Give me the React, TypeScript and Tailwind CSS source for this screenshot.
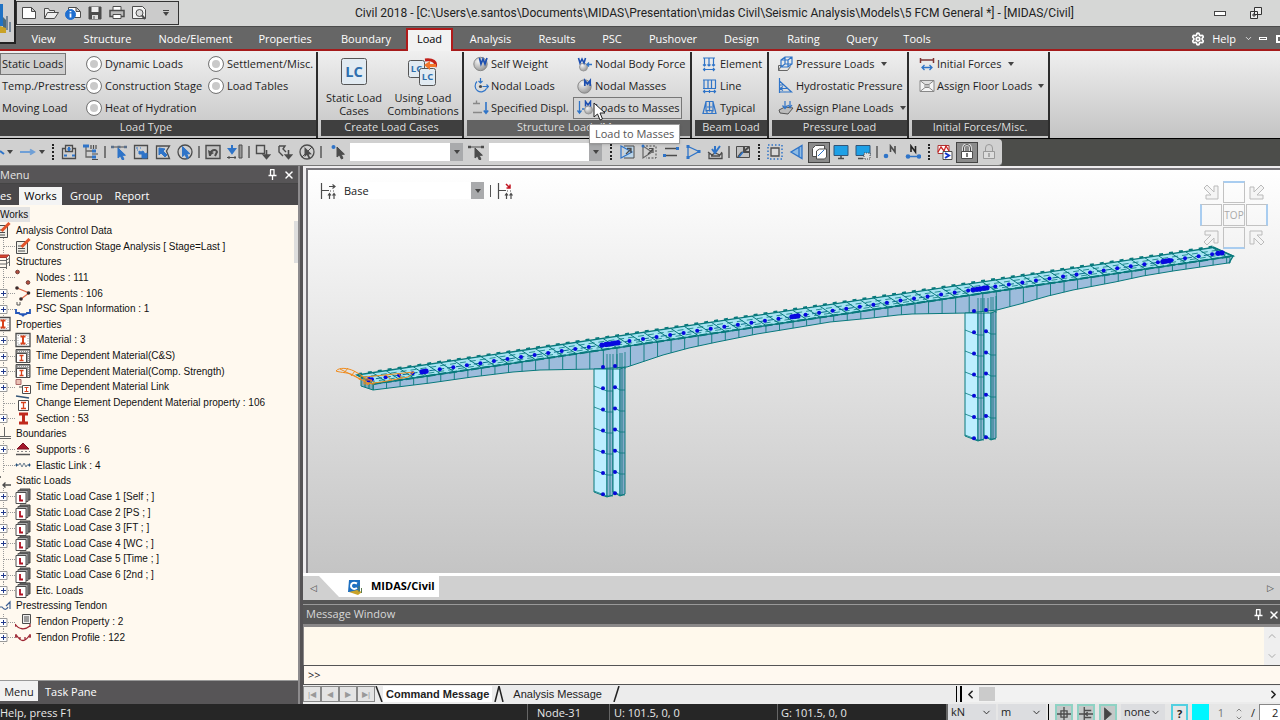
import type { ReactNode } from "react"
import { ChevronDown, ChevronLeft, ChevronRight, ChevronUp, Settings, X } from "lucide-react"

const UI = "font-['Open_Sans','Noto_Sans',sans-serif]"
const ARIAL = "font-['Liberation_Sans',Arial,sans-serif]"

const B = "#2f74c8"
const G = "#4c4c4c"

/* ---------- icons ---------- */

function Svg({ children, size = 16, vb = 16 }: { children: ReactNode; size?: number; vb?: number }) {
  return (
    <svg width={size} height={size} viewBox={`0 0 ${vb} ${vb}`} fill="none" stroke={G} strokeWidth={1} className="shrink-0" aria-hidden>
      {children}
    </svg>
  )
}

const cursorPath = "M0 0 L0 10 L2.4 8 L4.4 12 L6 11.2 L4.2 7.4 L7.4 7.2 Z"

const icons: Record<string, ReactNode> = {
  // quick access
  newDoc: <path d="M1.5 2.5h9l4 4v7h-13z M10.5 2.5v4h4" fill="#fff" />,
  open: <path d="M1.5 13.5v-10h4l1 2h5v2 M1.5 13.5l3-6h11l-4 6z" fill="#eee" />,
  info: (
    <>
      <path d="M3.5 2.5h8l4 4v6h-12z M11 2.5v4h4" fill="#fff" />
      <circle cx="5.5" cy="9.500" r="5" fill="#1f6fd0" stroke="#1f6fd0" />
      <path d="M5.500 8.500v4M5.500 6v1.300" stroke="#fff" strokeWidth="1.800" />
    </>
  ),
  save: (
    <>
      <path d="M2 2h12v12h-12z" fill="#4c4c4c" />
      <path d="M4.500 2h7v5h-7z" fill="#eee" stroke="none" />
      <path d="M5 10h6v4h-6z" fill="#ddd" stroke="none" />
      <path d="M7 11v3" />
    </>
  ),
  print: (
    <>
      <path d="M4 1.500h8v4h-8z" fill="#fff" />
      <path d="M1 5.500h14v6h-14z" fill="#bbb" strokeWidth="1.500" />
      <path d="M4 9.500h8v4h-8z" fill="#fff" />
    </>
  ),
  preview: (
    <>
      <path d="M1.500 13.500v-12h10l3 3v9z" fill="#f3f3f3" />
      <circle cx="8.500" cy="8" r="3.500" fill="#ddd" />
      <path d="M11 10.500l3 3.500" strokeWidth="2" />
    </>
  ),
  // ribbon
  weight: (
    <>
      <circle cx="7.500" cy="8" r="6.700" fill="url(#ball)" stroke="#888" />
      <path d="M6.500 2l1.500 6 2-5 2 5 2-6" stroke="#1d4fb0" strokeWidth="1.700" />
    </>
  ),
  body: (
    <>
      <circle cx="6.500" cy="11" r="4" fill="url(#ball)" stroke="#999" />
      <path d="M1.500 2l1.500 5 2-4 2 4 1.500-5" stroke="#1d4fb0" strokeWidth="1.600" />
      <path d="M10 8.500h5M12 6.500l-2 2 2 2" stroke={B} strokeWidth="1.300" />
    </>
  ),
  nodal: (
    <>
      <path d="M4 3.500a6 6 0 1 0 9.500 7" stroke={B} strokeWidth="1.200" />
      <circle cx="7.500" cy="8.500" r="1.600" fill={G} stroke="none" />
      <path d="M7.500 0v5M5.500 3l2 2 2-2M9.500 8.500h6M13.500 6.500l2 2-2 2" stroke={B} strokeWidth="1.200" />
    </>
  ),
  mass: (
    <>
      <circle cx="7.500" cy="8.500" r="6.700" fill="url(#ball)" stroke="#888" />
      <path d="M7.800 8V2.500l2.700 3.500 2.700-3.500V8" stroke="#1d4fb0" strokeWidth="1.700" />
    </>
  ),
  displ: (
    <>
      <path d="M0 3.500h7M3.500 3.500v-3M0 12.500h9" stroke="#888" strokeWidth="1.400" />
      <path d="M13 2v11M10.800 10.500l2.200 2.700 2.200-2.700" stroke={B} strokeWidth="1.600" />
    </>
  ),
  toMass: (
    <>
      <path d="M2.500 1v12M.5 10.500l2 2.700 2-2.700M5 9h3" stroke={B} strokeWidth="1.300" />
      <circle cx="11.500" cy="10" r="4" fill="url(#ball)" stroke="#999" />
      <path d="M8.500 6.500V1.500l2.500 3.500 2.500-3.500v5" stroke="#1d4fb0" strokeWidth="1.500" />
    </>
  ),
  element: <path d="M1 2h12M2.500 2v8M7 2v8M11.500 2v8M1 8.500l1.500 1.500L4 8.500M5.500 8.500L7 10l1.500-1.500M10 8.500l1.500 1.500L13 8.500M1 13.500h12M3 12l-1.500 1.500L3 15M11 12l1.500 1.500L11 15" stroke={B} strokeWidth="1.200" />,
  line: <path d="M1 2h13M2 2v8M6 2v8M9.500 2v8M13.500 2v8M1 10.500h13M1 13.500h13M3 12l-1.500 1.500L3 15M7.500 12v3M12 12l1.500 1.500L12 15" stroke={B} strokeWidth="1.200" />,
  typical: <path d="M4 1.500h7l3 12H1zM4 1.500v10M7.500 1.500v10M11 1.500v10M1 13.500h4v-3h5v3h4M5 7h5" stroke={B} strokeWidth="1.200" />,
  pressure: (
    <>
      <path d="M.5 14.500v-5h3l-3 5h9l3-4" stroke="#666" />
      <path d="M3 4l4-3h7v7l-4 3H3zM3 4h7v7M10 4l4-3M7 1v7l-4 3M7 8h7" stroke={B} strokeWidth="1.200" />
    </>
  ),
  hydro: <path d="M1.500 0v15M1.500 3l12 11h-12M1.500 7h4M1.500 10.500h8M5 8.500l-3 2 3 2" stroke={B} strokeWidth="1.200" />,
  plane: (
    <>
      <path d="M1 10l6-3 8 1-5 6-8-1z" fill="#bbb" stroke="#555" />
      <path d="M7 1v7M4.500 5.500L7 8.500l2.500-3M12 1v6M10 5l2 2.500L14 5" stroke={B} strokeWidth="1.200" />
    </>
  ),
  initial: (
    <>
      <path d="M1.500 2v5M14.500 2v5M1.500 4h13" stroke="#7d3434" strokeWidth="1.500" />
      <path d="M3 11.500h10M5.500 9L3 11.500 5.500 14M10.500 9l2.500 2.500-2.500 2.500" stroke={B} strokeWidth="1.300" />
    </>
  ),
  floor: <path d="M1 2.500h14v11H1zM1 2.500l5 4h4l5-4M1 13.500l5-4h4l5 4M5 8h6" fill="#f4f4f4" stroke="#888" />,
  // toolbar
  arrow: <path d="M0 8h14M10 5.500L14 8l-4 2.500" stroke="#6f9fd6" strokeWidth="2" />,
  selWin: (
    <>
      <path d="M1.500 4.500h3v-3h7v3h3v10h-13zM4.500 4.500v3h7v-3" strokeWidth="1.300" />
      <path d="M8 3v4M6.500 5h3M3 11.500h3M11 11.500h3" stroke={B} strokeWidth="2" />
    </>
  ),
  tree: (
    <>
      <path d="M3 3v10h6M3 7h6" stroke="#666" strokeWidth="1.300" />
      <path d="M0 2h6M9 7h4M9 13h4" stroke={B} strokeWidth="3" />
      <path d="M8 1v4M10.500 1v4M13 1v4M9 10h6M9 15.500h6" strokeWidth="1.200" />
    </>
  ),
  selNode: (
    <>
      <path d="M1 3h14" />
      <path d="M0 3h3M6.500 3h3M13 3h3" stroke="#5a6f8a" strokeWidth="2.600" />
      <path d={cursorPath} transform="translate(7 4)" fill={B} stroke={B} />
    </>
  ),
  selBox: (
    <>
      <path d="M1.500 1.500h13v13h-13z" strokeWidth="1.300" />
      <path d="M3 4h2M7 4h1M4 6h1" stroke={B} />
      <path d="M6 7v3h3v4h5V9l-2 1-2-3-2 1z" fill={B} stroke={B} />
    </>
  ),
  selPoly: (
    <>
      <path d="M1.500 2h13l-3 5 3 7.500h-13z" strokeWidth="1.300" />
      <path d="M4 4v7l2-2 4 4 2-2-4-4 2-2z" fill={B} stroke={B} />
    </>
  ),
  selCircle: (
    <>
      <circle cx="8" cy="8" r="7" strokeWidth="1.300" />
      <path d={cursorPath} transform="translate(5.500 2.500)" fill={B} stroke={B} />
    </>
  ),
  prev: (
    <>
      <path d="M1 1.500h14v13H1z" strokeWidth="1.400" fill="#c2c2c2" />
      <path d="M5 12c0-6 6-8 7-4l-2 4" strokeWidth="2" />
      <path d="M3 6l1 6 5-3z" fill={G} stroke="none" />
    </>
  ),
  down: (
    <>
      <path d="M5 1v7M2 5l3 4 3-4z" stroke={B} strokeWidth="2" fill={B} />
      <path d="M0 13.500h9M2 12v3M8 12v3" />
      <path d="M12 1h3v13h-3z" fill="#999" />
    </>
  ),
  boxDown: (
    <>
      <path d="M1.500 1.500h8v8h-8z" strokeWidth="1.400" />
      <path d="M11.500 6v8M8.500 11l3 3.500 3-3.500z" fill={G} strokeWidth="1.600" />
    </>
  ),
  polyDown: (
    <>
      <path d="M2 2h6L6 5l3 3M2 2v6l4 4" strokeWidth="1.400" />
      <path d="M11.500 6v8M8.500 11l3 3.500 3-3.500z" fill={G} strokeWidth="1.600" />
    </>
  ),
  unCircle: (
    <>
      <circle cx="8" cy="8" r="7" strokeWidth="1.300" />
      <path d={cursorPath} transform="translate(5.500 3)" fill={G} stroke="none" />
      <path d="M3 13L13 3" />
    </>
  ),
  pick: (
    <>
      <circle cx="2.500" cy="3" r="2" fill={B} stroke="none" />
      <path d={cursorPath} transform="translate(6 3)" fill={G} />
    </>
  ),
  pickLine: (
    <>
      <path d="M1 3h14" />
      <path d="M0 3h3M13 3h3" strokeWidth="2.600" />
      <path d={cursorPath} transform="translate(7 4)" fill={G} />
    </>
  ),
  act1: (
    <>
      <path d="M5 2h10v12H5" fill="#bcd6ea" />
      <path d="M2 2v12l11-6z" stroke={B} strokeWidth="1.200" />
      <path d="M7 10l5-5M12 9V4.500H8" strokeWidth="1.300" />
    </>
  ),
  act2: (
    <>
      <path d="M5 2h10v12H5" strokeDasharray="2 1.500" />
      <path d="M2 2v12l9-6z" stroke="#666" strokeWidth="1.200" />
      <path d="M7 10l5-5M12 9V4.500H8" strokeWidth="1.200" />
      <circle cx="2" cy="2" r="1.500" fill={B} stroke="none" />
    </>
  ),
  act3: (
    <>
      <path d="M2 4.500h12M2 11.500h12" strokeWidth="1.600" />
      <path d="M13 4.500h3M0 11.500h3" stroke={B} strokeWidth="3" />
    </>
  ),
  act4: (
    <>
      <path d="M3 2.500v11L14 7.500z" stroke={B} strokeWidth="1.300" />
      <path d="M1.500 2.500h3M1.500 13.500h3M12.500 7.500h3" stroke={B} strokeWidth="3" />
    </>
  ),
  act5: (
    <>
      <path d="M2 9v5.500h13V9M4 12h9M1 8l4 3 3-2 5 2 2-3" strokeWidth="1.300" />
      <path d="M8 2v6M5 5l3 4 5-7" stroke={B} strokeWidth="2" />
    </>
  ),
  act6: (
    <>
      <path d="M1.500 2.500h13v11h-13z" fill="#c2c2c2" />
      <path d="M3 13l4-5M8 8l6-5M9 3v5h5" strokeWidth="2" />
      <path d="M4 13l4-5" stroke={B} strokeWidth="1.500" />
    </>
  ),
  frame: (
    <>
      <path d="M4 4h8v8H4z" fill="#d9d9d9" strokeWidth="1.300" />
      <path d="M1 1h14v14H1z" stroke={B} strokeDasharray="1.500 2" strokeWidth="1.500" />
    </>
  ),
  persp: <path d="M13 1.500v13L2 8zM10 3v10" fill="#8fbbe4" stroke={B} strokeWidth="1.300" />,
  hidden: (
    <>
      <path d="M1.500 12.500v-8l3-3h9v8l-3 3z" fill="#fff" />
      <path d="M5.500 15v-8l3-2h7v8l-2 2z" fill="#fff" />
      <path d="M7 12l6-6" stroke={B} />
    </>
  ),
  screen: (
    <>
      <path d="M1 1.500h14v10H1z" fill="#1ea0e6" stroke="#357" />
      <path d="M5 14.500h6M8 12v2" strokeWidth="1.500" />
    </>
  ),
  screen2: (
    <>
      <path d="M1 1.500h14v10H1z" fill="#1ea0e6" stroke="#357" />
      <path d="M3 14.500h5" strokeWidth="1.500" />
      <path d="M9 9h6v6H9z" fill="#ddd" strokeDasharray="1 1" />
    </>
  ),
  nodeN: (
    <>
      <circle cx="3" cy="12" r="2.300" fill={B} stroke="none" />
      <path d="M7.500 8V2l4.500 6V2" strokeWidth="1.600" />
    </>
  ),
  elemN: (
    <>
      <path d="M3 12.500h11" stroke={B} strokeWidth="1.500" />
      <circle cx="3" cy="12.500" r="2.300" fill={B} stroke="none" />
      <circle cx="14" cy="12.500" r="2.300" fill={B} stroke="none" />
      <path d="M6 8V2l4.500 6V2" strokeWidth="1.600" stroke="#222" />
    </>
  ),
  result: (
    <>
      <path d="M1 1.500h11v8H1z" fill="#fff" stroke="#a33" />
      <path d="M1 8l3-5 3 4 2-5 3 5" stroke="#c22" strokeWidth="1.300" />
      <path d="M6 7.500h9v8H6z" fill="#fff" />
      <path d="M8 9l4 2.500-4 2.500" stroke="#13c" strokeWidth="2" />
    </>
  ),
  lock: (
    <>
      <path d="M4.500 7V4a3.500 3.500 0 0 1 7 0v3" stroke="#eee" strokeWidth="2.600" />
      <path d="M4.500 7V4a3.500 3.500 0 0 1 7 0v3" />
      <path d="M2.500 7.500h11v7h-11z" fill="#fff" />
      <path d="M8 9v4" strokeWidth="1.500" />
    </>
  ),
  lockOff: (
    <g stroke="#999">
      <path d="M4.500 7V4a3.500 3.500 0 0 1 7 0v3" />
      <path d="M2.500 7.500h11v7h-11z" fill="#ddd" />
      <path d="M8 9v4" strokeWidth="1.500" />
    </g>
  ),
  stage: <path d="M1.500 0v16M2 7.500h7M9 3.500h6M12.500 1.500l2.500 2-2.500 2M10 8h1M13 8h1M9.500 16v-5M8 12.500l1.500-2 1.500 2M14 16v-5M12.500 12.500l1.500-2 1.500 2" strokeWidth="1.200" />,
  stageRed: (
    <>
      <path d="M1.500 0v16M2 7.500h7M10 8h1M13 8h1M9.500 16v-5M8 12.500l1.500-2 1.500 2M14 16v-5M12.500 12.500l1.500-2 1.500 2" strokeWidth="1.200" />
      <path d="M9 1l4 4M13 1.500V5H9.500" stroke="#c1121f" strokeWidth="1.500" />
    </>
  ),
  // works tree
  edit: (
    <>
      <path d="M1.500 3.500h11v12h-11z" fill="#f0efe8" />
      <path d="M3 8h6M3 10.500h7M3 13h7" />
      <path d="M6.500 9L14.500 1" stroke="#e2532a" strokeWidth="3" />
    </>
  ),
  struct: (
    <>
      <path d="M0 3h11l3-2M0 6.500h11l3-2M0 10h11l3-2M0 13.500h11M11.500 3v12M14.500 1v11" stroke="#666" />
      <path d="M0 3l2-2h12l-3 2.500H0z" fill="#d9482b" stroke="#a33" />
    </>
  ),
  nodes: (
    <g fill="#b8503f" stroke="#6b3a34">
      <circle cx="2.500" cy="3" r="1.800" />
      <circle cx="13" cy="13.500" r="1.800" />
    </g>
  ),
  elems: (
    <>
      <path d="M2 3l12 5-8 6" stroke="#e06a4a" strokeWidth="1.300" />
      <g fill="#3a2a2a" stroke="none">
        <circle cx="2" cy="3" r="1.800" />
        <circle cx="13.500" cy="8" r="1.800" />
        <circle cx="6" cy="14" r="1.800" />
      </g>
    </>
  ),
  span: (
    <>
      <path d="M2 1v3h3V1" stroke="#555" />
      <path d="M1 8v4h3c0 2 8 2 8 0h3V8" stroke="#2556b8" strokeWidth="1.800" />
      <path d="M5 12.500h6L8 16z" fill="#2556b8" stroke="none" />
    </>
  ),
  material: (
    <>
      <path d="M1 1.500h14v13H1z" fill="#fff" strokeWidth="1.300" />
      <path d="M3 3.500h10v9H3z" stroke="#999" strokeDasharray="1 1.500" />
      <path d="M5.500 4.500h5M8 4.500v7M5.500 11.500h5" stroke="#d8421c" strokeWidth="2" />
    </>
  ),
  timeMat: (
    <>
      <path d="M1 1.500h14v13H1z" fill="#999" />
      <path d="M1.500 5.500h10v9h-10z" fill="#fff" />
      <path d="M4.500 7.500h4M6.500 7.500v5M4.500 12.500h4" stroke="#d8421c" strokeWidth="1.300" />
      <path d="M3 3.500h11M13.500 5v9" stroke="#eee" strokeDasharray="1 1" />
    </>
  ),
  matLink: (
    <>
      <path d="M1 .5h5v5H1z" fill="#eac0b4" stroke="#a66" />
      <path d="M4 8h3" />
      <path d="M7.500 6.500h8v8h-8z" fill="#fff" />
      <path d="M9.500 8.500h4M11.500 8.500v4M9.500 12.500h4" stroke="#d8421c" />
    </>
  ),
  change: (
    <>
      <path d="M1 1l13 2" stroke="#357" strokeWidth="1.300" />
      <path d="M3.500 5.500h10v10h-10z" fill="#fff" />
      <path d="M6 7.500h5M8.500 7.500v6M6 13.500h5" stroke="#d8421c" strokeWidth="1.300" />
    </>
  ),
  section: <path d="M4 4h9M8.500 4v9M4 13h9" stroke="#c0291c" strokeWidth="3" />,
  boundary: <path d="M0 10.500h16M0 12.500h16M9.500 1v9" stroke="#666" />,
  supports: (
    <>
      <path d="M8 2l6 6H2z" fill="#a5182b" stroke="#7a1020" />
      <path d="M2 10.500h13" strokeDasharray="2 2" stroke="#888" />
      <path d="M1 13.500h14" stroke="#555" strokeWidth="1.500" />
    </>
  ),
  elastic: (
    <>
      <path d="M0 8h4l1-2 2 4 2-4 2 4 1-2h4" stroke="#6b7f92" />
      <path d="M1 6l2 2-2 2zM15 6l-2 2 2 2z" fill="#24507c" stroke="none" />
    </>
  ),
  loads: <path d="M5 4h1M8 12h8M10.500 9.500L8 12l2.500 2.500" strokeWidth="1.400" />,
  loadCase: (
    <>
      <path d="M5 1h10v11H5z" fill="#777" stroke="#444" />
      <path d="M3 2.500h10v11H3z" fill="#aaa" stroke="#555" />
      <path d="M1 4.500h10v11H1z" fill="#fff" />
      <path d="M5 7v5.500h3" stroke="#b01020" strokeWidth="1.800" />
    </>
  ),
  tendon: <path d="M5 9h2c3 4 5 2 6 0M11 8l4-4v7" stroke="#3d5f92" strokeWidth="1.200" />,
  tendonProp: (
    <>
      <path d="M7.500.5h8v9h-8z" fill="#eee" />
      <path d="M9 3h5M9 5h5M9 7h5" />
      <path d="M0 10c4 6 10 6 15 2M0 10v3M15 10v3" stroke="#9c2431" strokeWidth="1.300" />
    </>
  ),
  tendonProf: <path d="M0 7h2c4 6 8 6 12 0h2M1 5v4M15 5v4M5 8v3M10 8v3" stroke="#9c2431" strokeWidth="1.300" />,
}

function Icon({ name, size = 16 }: { name: string; size?: number }) {
  return <Svg size={size}>{icons[name]}</Svg>
}

function Caret() {
  return <span className="block h-0 w-0 shrink-0 border-x-3 border-t-4 border-x-transparent border-t-[#444]" />
}

function Pin() {
  return (
    <svg width="9" height="11" viewBox="0 0 9 11" fill="none" stroke="#fff" aria-hidden>
      <path d="M2.500 1v5M6 .5v6M2 .5h4.500M.5 6.500h8M4.500 7v4" strokeWidth="1.300" />
    </svg>
  )
}

/* ---------- title and ribbon ---------- */

const menuTabs = [
  { label: "View", w: "w-[49px]" },
  { label: "Structure", w: "w-[79px]" },
  { label: "Node/Element", w: "w-[97px]" },
  { label: "Properties", w: "w-[82px]" },
  { label: "Boundary", w: "w-[80px]" },
  { label: "Load", w: "w-[47px]" },
  { label: "Analysis", w: "w-[75px]" },
  { label: "Results", w: "w-[58px]" },
  { label: "PSC", w: "w-[52px]" },
  { label: "Pushover", w: "w-[70px]" },
  { label: "Design", w: "w-[67px]" },
  { label: "Rating", w: "w-[57px]" },
  { label: "Query", w: "w-[60px]" },
  { label: "Tools", w: "w-[50px]" },
]

function TitleBar() {
  return (
    <header className="flex h-[51px] shrink-0 bg-[#d6d7d6]">
      <div className="w-4 shrink-0 border-b-2 border-[#a51b1b] bg-[#666]">
        <button aria-label="Application menu" className="block h-11 w-4 overflow-hidden border-r-2 border-b-2 border-[#222] bg-[#cfcfcf]">
          <svg width="14" height="42" viewBox="0 0 14 42" aria-hidden>
            <path d="M0 4h3v22H0z" fill="#1f72c4" />
            <path d="M3 17l3 3v11H3z" fill="#4d6b7b" />
            <path d="M0 26l6 2v5H0z" fill="#c9a227" />
            <path d="M7 16v14M10 22v10" stroke="#789" strokeWidth="2" />
          </svg>
        </button>
      </div>
      <div className="flex min-w-0 flex-1 flex-col">
        <div className="flex h-[26px] items-center">
          <div className="flex h-6 w-[163px] shrink-0 items-center gap-[6px] border border-[#333] bg-[#cbcbcb] pl-1">
            {["newDoc", "open", "info", "save", "print", "preview"].map((n) => (
              <button key={n} aria-label={n}>
                <Icon name={n} />
              </button>
            ))}
            <button aria-label="Customize" className="ml-[10px] flex flex-col items-center gap-px">
              <span className="h-px w-[6px] bg-[#444]" />
              <Caret />
            </button>
          </div>
          <h1 className="min-w-0 flex-1 truncate pl-44 font-['Roboto','Open_Sans',sans-serif] text-[12px] leading-4 text-[#222]">
            Civil 2018 - [C:\Users\e.santos\Documents\MIDAS\Presentation\midas Civil\Seismic Analysis\Models\5 FCM General *] - [MIDAS/Civil]
          </h1>
          <button aria-label="Minimize" className="mr-6 h-[5px] w-3 border border-[#444] bg-white" />
          <button aria-label="Restore" className="mr-[18px]">
            <svg width="12" height="12" viewBox="0 0 12 12" fill="#eee" stroke="#333" aria-hidden>
              <path d="M4.500.5h7v7h-7z M.5 4.500h7v7h-7z M3 7h2v2H3z" />
            </svg>
          </button>
        </div>
        <nav className="flex h-[25px] items-end border-t border-b-2 border-t-[#4b4b4b] border-b-[#a51b1b] bg-[#666] pl-[3px] text-[11px] leading-[20px] text-white">
          {menuTabs.map((t) =>
            t.label === "Load" ? (
              <button key={t.label} className={`${t.w} -mb-[2px] h-[23px] border-2 border-b-0 border-[#b01a1a] bg-[#f2f2f2] pb-[3px] leading-[18px] text-black`}>
                {t.label}
              </button>
            ) : (
              <button key={t.label} className={`${t.w} h-[21px] whitespace-nowrap`}>
                {t.label}
              </button>
            ),
          )}
          <div className="ml-auto flex h-[21px] items-center">
            <Settings size={14} strokeWidth={3} />
            <button className="ml-[7px]">Help</button>
            <ChevronDown size={9} className="ml-2" />
            <span className="ml-[6px] h-[3px] w-2 border border-white" />
            <span className="ml-[9px] h-2 w-1 border-2 border-r-0 border-white" />
          </div>
        </nav>
      </div>
    </header>
  )
}

function Group({ title, width, children, lit }: { title: string; width: string; children: ReactNode; lit?: boolean }) {
  return (
    <section className={`${width} flex shrink-0 flex-col border-r-2 border-[#2c2c2c]`}>
      <div className="flex h-[68px] pt-px">{children}</div>
      <h2 className={`h-4 text-center text-[11px] leading-[14px] whitespace-nowrap text-[#dedede] ${lit ? "bg-[#626262]" : "bg-[#3f3f3f]"}`}>{title}</h2>
    </section>
  )
}

function Cmd({ icon, label, caret, hot }: { icon: string; label: string; caret?: boolean; hot?: boolean }) {
  return (
    <button className={`flex h-[22px] items-center gap-[2px] pl-1 whitespace-nowrap ${hot ? "bg-[#d5d5d5] pr-[2px] outline outline-[#777] -outline-offset-1" : ""}`}>
      <Icon name={icon} />
      {label}
      {caret && <span className="pl-1"><Caret /></span>}
    </button>
  )
}

function LoadType({ label, bare, on }: { label: string; bare?: boolean; on?: boolean }) {
  return (
    <label className={`flex h-[22px] items-center gap-[3px] whitespace-nowrap ${bare ? "pl-[2px]" : ""} ${on ? "mr-1 bg-[#cfcfcf] outline outline-[#777] -outline-offset-1" : ""}`}>
      <input
        type="radio"
        name="loadType"
        defaultChecked={on}
        className={bare ? "sr-only" : "size-4 shrink-0 appearance-none rounded-full border border-[#777] bg-[#c9c9c9] shadow-[inset_0_0_0_3px_#fff]"}
      />
      {label}
    </label>
  )
}

function LcTile({ x = 0, y = 0, s = 26 }: { x?: number; y?: number; s?: number }) {
  return (
    <g transform={`translate(${x} ${y})`}>
      <rect x=".5" y=".5" width={s - 1} height={s} rx="2" fill="#e2ebf2" stroke="#555" />
      <text x={s / 2} y={s * 0.72} textAnchor="middle" fontSize={s * 0.56} fontWeight="bold" fill="#2f6fae" fontFamily="Open Sans">
        LC
      </text>
    </g>
  )
}

function Ribbon() {
  return (
    <div className="flex h-[88px] shrink-0 gap-[3px] border-b border-b-black bg-linear-to-b from-[#efefef] to-[#c4c4c4] pt-px text-[11px] text-[#1d1d1d]">
      <Group title="Load Type" width="w-[318px] -indent-6">
        <div className="w-[86px] shrink-0 indent-0">
          <div className="w-[70px]"><LoadType label="Static Loads" bare on /></div>
          <LoadType label="Temp./Prestress" bare />
          <LoadType label="Moving Load" bare />
        </div>
        <div className="w-[122px] shrink-0 indent-0">
          <LoadType label="Dynamic Loads" />
          <LoadType label="Construction Stage" />
          <LoadType label="Heat of Hydration" />
        </div>
        <div className="indent-0">
          <LoadType label="Settlement/Misc." />
          <LoadType label="Load Tables" />
        </div>
      </Group>
      <Group title="Create Load Cases" width="w-[143px]">
        <button className="flex w-[66px] flex-col items-center pt-1 leading-[13px]">
          <svg width="28" height="30" viewBox="0 0 28 30" aria-hidden><LcTile x={1} y={1} /></svg>
          <span className="pt-1">Static Load<br />Cases</span>
        </button>
        <button className="flex w-[72px] flex-col items-center pt-1 leading-[13px]">
          <svg width="30" height="30" viewBox="0 0 30 30" aria-hidden>
            <LcTile y={3} s={17} />
            <LcTile x={11} y={11} s={17} />
            <path d="M17 3c8-1 12 2 10 7" fill="none" stroke="#c2201a" strokeWidth="3" />
            <path d="M16 8l6-4v3h6v3h-6v3z" fill="#f2762b" />
          </svg>
          <span className="pt-1">Using Load<br />Combinations</span>
        </button>
      </Group>
      <Group title="Structure Loads/Masses" width="w-[225px]" lit>
        <div className="w-[106px] shrink-0 pl-[2px]">
          <Cmd icon="weight" label="Self Weight" />
          <Cmd icon="nodal" label="Nodal Loads" />
          <Cmd icon="displ" label="Specified Displ." />
        </div>
        <div>
          <Cmd icon="body" label="Nodal Body Force" />
          <Cmd icon="mass" label="Nodal Masses" />
          <Cmd icon="toMass" label="Loads to Masses" hot />
        </div>
      </Group>
      <Group title="Beam Load" width="w-[74px]">
        <div className="pl-[3px]">
          <Cmd icon="element" label="Element" />
          <Cmd icon="line" label="Line" />
          <Cmd icon="typical" label="Typical" />
        </div>
      </Group>
      <Group title="Pressure Load" width="w-[137px]">
        <div className="pl-[2px]">
          <Cmd icon="pressure" label="Pressure Loads" caret />
          <Cmd icon="hydro" label="Hydrostatic Pressure" />
          <Cmd icon="plane" label="Assign Plane Loads" caret />
        </div>
      </Group>
      <Group title="Initial Forces/Misc." width="w-[138px]">
        <div className="pl-[3px]">
          <Cmd icon="initial" label="Initial Forces" caret />
          <Cmd icon="floor" label="Assign Floor Loads" caret />
        </div>
      </Group>
    </div>
  )
}

/* ---------- icon toolbar ---------- */

function Tool({ name, on }: { name: string; on?: boolean }) {
  return (
    <button aria-label={name} className={`flex h-[21px] w-[22px] shrink-0 items-center justify-center ${on ? "border border-[#444] bg-[#8b8b8b]" : ""}`}>
      <Icon name={name} />
    </button>
  )
}

function Bar() {
  return <span className="mx-[2px] h-3 w-[2px] shrink-0 bg-[#777]" />
}

function Grip() {
  return <span className="mx-1 block h-4 w-0 shrink-0 border-l-2 border-dotted border-[#222]" />
}

function Combo({ label }: { label: string }) {
  return (
    <span className="flex h-[18px] w-[113px] shrink-0 bg-white">
      <select aria-label={label} className="min-w-0 flex-1 appearance-none" />
      <span className="flex w-[13px] items-center justify-center bg-[#a9aaac]"><Caret /></span>
    </span>
  )
}

function Toolbar() {
  return (
    <div className="flex h-[27px] shrink-0 bg-[#4c4d4a]">
      <div className="flex w-[1002px] shrink-0 items-center rounded-r-sm border-b border-[#777] bg-[#d0d0d0]">
        <svg width="5" height="16" viewBox="0 0 5 16" className="shrink-0" aria-hidden><path d="M0 7l4 3" stroke={B} strokeWidth="2" /></svg>
        <span className="mr-1 ml-[2px]"><Caret /></span>
        <Tool name="arrow" />
        <Caret />
        <span className="ml-[3px]"><Grip /></span>
        <Tool name="selWin" />
        <Tool name="tree" />
        <Bar />
        <Tool name="selNode" />
        <Tool name="selBox" />
        <Tool name="selPoly" />
        <Tool name="selCircle" />
        <Bar />
        <Tool name="prev" />
        <Tool name="down" />
        <Bar />
        <Tool name="boxDown" />
        <Tool name="polyDown" />
        <Tool name="unCircle" />
        <Bar />
        <span className="ml-1"><Tool name="pick" /></span>
        <Combo label="Select node" />
        <span className="mx-[2px]"><Tool name="pickLine" /></span>
        <Combo label="Select element" />
        <span className="ml-1"><Grip /></span>
        <Tool name="act1" />
        <Tool name="act2" />
        <Tool name="act3" />
        <Tool name="act4" />
        <Tool name="act5" />
        <Bar />
        <Tool name="act6" />
        <Grip />
        <Tool name="frame" />
        <Tool name="persp" />
        <Tool name="hidden" on />
        <Tool name="screen" />
        <Tool name="screen2" />
        <Bar />
        <Tool name="nodeN" />
        <Tool name="elemN" />
        <Grip />
        <Tool name="result" />
        <Tool name="lock" on />
        <Tool name="lockOff" />
      </div>
    </div>
  )
}

/* ---------- works tree ---------- */

type Row = { text: string; icon?: string; root?: boolean; plus?: boolean }

const rows: Row[] = [
  { text: "Works" },
  { text: "Analysis Control Data", icon: "edit", root: true },
  { text: "Construction Stage Analysis [ Stage=Last ]", icon: "edit" },
  { text: "Structures", icon: "struct", root: true },
  { text: "Nodes : 111", icon: "nodes" },
  { text: "Elements : 106", icon: "elems", plus: true },
  { text: "PSC Span Information : 1", icon: "span", plus: true },
  { text: "Properties", icon: "material", root: true },
  { text: "Material : 3", icon: "material", plus: true },
  { text: "Time Dependent Material(C&S)", icon: "timeMat", plus: true },
  { text: "Time Dependent Material(Comp. Strength)", icon: "timeMat", plus: true },
  { text: "Time Dependent Material Link", icon: "matLink", plus: true },
  { text: "Change Element Dependent Material property : 106", icon: "change" },
  { text: "Section : 53", icon: "section", plus: true },
  { text: "Boundaries", icon: "boundary", root: true },
  { text: "Supports : 6", icon: "supports", plus: true },
  { text: "Elastic Link : 4", icon: "elastic" },
  { text: "Static Loads", icon: "loads", root: true },
  { text: "Static Load Case 1 [Self ; ]", icon: "loadCase", plus: true },
  { text: "Static Load Case 2 [PS ; ]", icon: "loadCase", plus: true },
  { text: "Static Load Case 3 [FT ; ]", icon: "loadCase", plus: true },
  { text: "Static Load Case 4 [WC ; ]", icon: "loadCase", plus: true },
  { text: "Static Load Case 5 [Time ; ]", icon: "loadCase" },
  { text: "Static Load Case 6 [2nd ; ]", icon: "loadCase", plus: true },
  { text: "Etc. Loads", icon: "loadCase", plus: true },
  { text: "Prestressing Tendon", icon: "tendon", root: true },
  { text: "Tendon Property : 2", icon: "tendonProp", plus: true },
  { text: "Tendon Profile : 122", icon: "tendonProf", plus: true },
]

function TreeRow({ row }: { row: Row }) {
  if (!row.icon) {
    return <li className="flex items-center"><span className="bg-[#e2e2e2] pr-[2px]">{row.text}</span></li>
  }
  if (row.root) {
    return (
      <li className="flex items-center">
        <span className="flex w-4 shrink-0 justify-end overflow-hidden pr-[5px]"><Icon name={row.icon} /></span>
        {row.text}
      </li>
    )
  }
  return (
    <li className="flex items-center">
      <svg width="15" height="16" viewBox="0 0 15 16" fill="none" stroke="#999" className="shrink-0" aria-hidden>
        <path d="M3.500 0v16M4 8.500h11" strokeDasharray="1 1" />
        {row.plus && (
          <>
            <path d="M-1 4.500h8v8h-8z" fill="#fff" stroke="#999" />
            <path d="M1 8.500h5M3.500 6v5" stroke="#223a8c" />
          </>
        )}
      </svg>
      <Icon name={row.icon} />
      <span className="pl-[5px]">{row.text}</span>
    </li>
  )
}

function WorksPane() {
  return (
    <aside className="flex w-[300px] shrink-0 flex-col border-r-2 border-[#8d8b8d] bg-[#575557] text-[11px] text-[#e4e4e4]">
      <div className="flex h-[18px] shrink-0 items-center border-b border-[#444] pr-[3px] leading-4">
        Menu
        <span className="ml-auto flex items-center gap-[6px]">
          <button aria-label="Pin"><Pin /></button>
          <button aria-label="Close menu"><X size={12} strokeWidth={3} color="#fff" /></button>
        </span>
      </div>
      <div className="flex h-[21px] shrink-0 items-end bg-[#4a484a] leading-[18px] text-white">
        <button className="w-[19px] pr-2 text-right">es</button>
        <button className="w-[43px] bg-[#f4f4f4] text-black">Works</button>
        <button className="ml-2">Group</button>
        <button className="ml-3">Report</button>
      </div>
      <div className="flex min-h-0 flex-1 border-b border-[#999] bg-[#fff9ef]">
        <ul className={`${ARIAL} grid h-[440px] min-w-0 flex-1 auto-rows-fr pt-[2px] text-[10px] leading-[15px] whitespace-nowrap text-[#111]`}>
          {rows.map((r) => <TreeRow key={r.text} row={r} />)}
        </ul>
        <div className="mt-4 h-[42px] w-1 bg-[#dedede]" />
      </div>
      <div className="flex h-[23px] shrink-0 items-start leading-[21px] text-white">
        <button className="h-5 w-[38px] bg-[#f2f2f2] text-[#222]">Menu</button>
        <button className="ml-[7px] h-5">Task Pane</button>
      </div>
    </aside>
  )
}

/* ---------- model ---------- */

type Pt = [number, number]

const TEAL = "#08797c"

const soffit: Pt[] = [
  [373, 390], [430, 383], [472, 377], [513, 372], [540, 370], [595, 369], [627, 367], [663, 355],
  [689, 348], [717, 342], [757, 334], [800, 327], [830, 322], [872, 318], [898, 315], [912, 314],
  [967, 313], [997, 310], [1020, 304], [1048, 296], [1073, 290], [1115, 282], [1143, 276],
  [1173, 271], [1228, 263],
]

const frontY = (x: number) => 384 - (x - 373) * 0.1488
const centreY = (x: number) => 380 - (x - 367) * 0.1488
const backY = (x: number) => 375 - (x - 357) * 0.1488

function soffitY(x: number) {
  for (let i = 1; i < soffit.length; i++) {
    const [x1, y1] = soffit[i]
    if (x <= x1) {
      const [x0, y0] = soffit[i - 1]
      return y0 + ((y1 - y0) * (x - x0)) / (x1 - x0)
    }
  }
  return 263
}

const stations = Array.from({ length: 64 }, (_, i) => 373 + i * 13.55)
const clusters = [369, 422, 424, 426, 602, 606, 609, 612, 615, 618, 792, 795, 798, 973, 977, 980, 984, 987, 1163, 1166, 1169, 1218, 1222]

function Pier({ x, top }: { x: number; top: number }) {
  const levels = [0, 1, 2, 3, 4, 5]
  return (
    <g stroke={TEAL}>
      <path d={`M${x} ${top}V${top + 123}L${x + 13} ${top + 128}V${top}z`} fill="#bdeeff" />
      <path d={`M${x + 13} ${top}V${top + 128}L${x + 19} ${top + 126}V${top}z`} fill="#92b7d4" />
      <path d={`M${x + 19} ${top}V${top + 123}L${x + 26} ${top + 127}V${top}z`} fill="#bdeeff" />
      <path d={`M${x + 26} ${top}V${top + 127}L${x + 31} ${top + 125}V${top - 2}z`} fill="#86a9c8" />
      <path d={`M${x + 13} ${top}v-15M${x + 16} ${top + 127}V${top - 15}M${x + 19} ${top}v-15M${x + 23} ${top}v-15M${x + 26} ${top}v-16M${x + 28} ${top + 126}V${top - 16}M${x + 31} ${top}v-17`} strokeWidth=".8" />
      {levels.map((l) => {
        const y = top + 17 + l * 21
        return <path key={l} d={`M${x} ${y}l13 5h6M${x + 19} ${y}l7 4h5`} strokeWidth=".8" />
      })}
      {[...levels, 6].map((l) => {
        const y = top - 3 + l * 21.2
        return (
          <g key={l} fill="#0808d8" stroke="none">
            <circle cx={x + 9} cy={y + 1} r="2" />
            <circle cx={x + 21} cy={y} r="2" />
          </g>
        )
      })}
    </g>
  )
}

function Bridge() {
  const under = soffit.map(([x, y]) => `${x} ${y}`).reverse().join("L")
  return (
    <svg viewBox="308 170 972 403" preserveAspectRatio="xMinYMin meet" className="w-full" fill="none" role="img" aria-label="Bridge model">
      <path d={`M373 384L1230 256.500V263L${under}z`} fill="#9dbcdc" stroke={TEAL} />
      {stations.map((x) => (
        <path key={x} d={`M${x} ${frontY(x)}V${soffitY(x)}`} stroke={TEAL} strokeWidth=".9" />
      ))}
      <Pier x={594} top={369} />
      <Pier x={965} top={313} />
      <path d="M361 376L373 384V390L361 386z" fill="#7fa8b8" stroke={TEAL} />
      <path d="M365 378v9M369 381v8" stroke={TEAL} />
      <path d="M357 375L1213 247.500L1233 256L373 384z" fill="#a6e4f2" stroke={TEAL} strokeWidth="1.300" />
      {stations.map((x) => (
        <path key={x} d={`M${x - 14} ${backY(x - 14)}L${x} ${frontY(x)}`} stroke={TEAL} />
      ))}
      <path d="M361 377.500L1219 250M369 382L1228 254" stroke={TEAL} strokeWidth=".8" strokeDasharray="6 4" />
      <path d="M358 374L1213 246.500" stroke={TEAL} strokeWidth="2" strokeDasharray="4 6" />
      <path d="M373 384L1233 256" stroke={TEAL} strokeWidth="2" strokeDasharray="8 3" />
      <path d="M367 380L1222 252.800" stroke="#0a6f8c" strokeDasharray="6 3" />
      <path d="M1213 247L1233 256L1229 263" stroke={TEAL} strokeWidth="1.500" />
      <g fill="#0808e0">
        {stations.slice(0, 63).map((x) => <circle key={x} cx={x - 1} cy={centreY(x - 1)} r="2" />)}
        {clusters.map((x) => <circle key={x} cx={x} cy={centreY(x)} r="2.600" />)}
      </g>
      <g stroke="#f08c1e">
        <path d="M336 371c3-4 12-3 18 0s9 6 14 8 8 5 5 5-12-4-18-8-14-3-19-5z" />
        <path d="M340 369l22 11M348 368l-4 5M355 371l-4 5M362 375l-3 5" />
        <path d="M364 377c12-1 30-3 50-5l-6 5c-12 2-28 6-44 7z" />
        <path d="M364 380h8l-4 5zM386 375l6 5M398 373l4 5" />
      </g>
    </svg>
  )
}

const arrowTurn: Record<string, string> = { nw: "", ne: "rotate-90", se: "rotate-180", sw: "-rotate-90" }

function CubeArrow({ dir }: { dir: string }) {
  return (
    <button aria-label={`View ${dir}`} className="flex items-center justify-center">
      <svg width="16" height="16" viewBox="0 0 16 16" fill="#f4f4f4" stroke="#bbb" className={arrowTurn[dir]} aria-hidden>
        <path d="M1 4l3-3 7 7V2h4v13H3v-4h5z" />
      </svg>
    </button>
  )
}

function ViewCube() {
  const face = "border border-[#c2c2c2]"
  return (
    <div className="absolute top-[11px] right-3 grid grid-cols-[22px_22px_22px] grid-rows-[22px_22px_22px] gap-px text-[10px] text-[#aaa]">
      <CubeArrow dir="nw" />
      <button aria-label="Back" className={`${face} border-t-2 border-t-[#a9cdf0]`} />
      <CubeArrow dir="ne" />
      <button aria-label="Left" className={`${face} border-l-2 border-l-[#a9cdf0]`} />
      <button className={face}>TOP</button>
      <button aria-label="Right" className={`${face} border-r-2 border-r-[#a9cdf0]`} />
      <CubeArrow dir="sw" />
      <button aria-label="Front" className={`${face} border-b-2 border-b-[#a9cdf0]`} />
      <CubeArrow dir="se" />
    </div>
  )
}

function ModelView() {
  return (
    <div className="relative min-h-0 flex-1 overflow-hidden border-t-2 border-l-2 border-[#77757a] bg-linear-to-b from-white to-[#c4c4c4]">
      <Bridge />
      <div className="absolute top-3 left-3 flex items-center text-[11px] text-[#222]">
        <Icon name="stage" />
        <span className="ml-[3px] flex h-[17px] w-[145px] bg-white">
          <select aria-label="Construction stage" className="min-w-0 flex-1 appearance-none pl-[5px] leading-4">
            <option>Base</option>
          </select>
          <span className="flex w-[13px] items-center justify-center bg-[#a9aaac]"><Caret /></span>
        </span>
        <span className="mx-[6px] h-3 w-px bg-[#555]" />
        <button aria-label="Stage options"><Icon name="stageRed" /></button>
      </div>
      <ViewCube />
    </div>
  )
}

/* ---------- document tabs and messages ---------- */

function DocTabs() {
  return (
    <div className="flex h-[27px] shrink-0 items-center border-t-3 border-white bg-[#d0d0d0] text-[#444]">
      <button aria-label="Scroll tabs left" className="w-4 pl-1 text-[9px]">◁</button>
      <button className="flex h-[21px] w-[120px] items-center self-start bg-white pl-[28px] text-[11px] font-bold whitespace-nowrap text-black [clip-path:polygon(0_0,100%_0,100%_100%,20px_100%)]">
        <svg width="16" height="16" viewBox="0 0 16 16" className="mr-2 shrink-0" aria-hidden>
          <path d="M2 1h11v12H1z" fill="#1d6fc0" />
          <path d="M10 4.500c-4-2-6 0-6 2.500s3 4 6 2" fill="none" stroke="#fff" strokeWidth="2" />
          <path d="M2 13l8-2 5 2-4 3z" fill="#c9a227" />
          <path d="M12 7v6M14.500 9v5" stroke="#5b7a50" />
        </svg>
        MIDAS/Civil
      </button>
      <button aria-label="Scroll tabs right" className="mr-[6px] ml-auto text-[9px]">▷</button>
    </div>
  )
}

function MessageWindow() {
  return (
    <section className="flex shrink-0 flex-col border-t-4 border-[#555] bg-[#ececec] text-[#222]">
      <div className="flex h-5 items-center border-t border-[#999] bg-[#575757] pl-[3px] text-[11px] text-[#d8d8d8]">
        Message Window
        <span className="ml-auto flex items-center gap-[5px]">
          <button aria-label="Pin"><Pin /></button>
          <button aria-label="Close messages"><X size={12} strokeWidth={3} color="#fff" /></button>
        </span>
      </div>
      <div className="flex h-[41px] border-t-3 border-l border-[#8a8888] bg-[#fff9ec]">
        <textarea aria-label="Messages" readOnly className="min-w-0 flex-1 resize-none" />
        <div className="flex w-4 flex-col items-center justify-between bg-[#efefef] py-[3px] text-[#aaa]">
          <ChevronUp size={12} />
          <ChevronDown size={12} />
        </div>
      </div>
      <div className="flex h-5 items-center border-t border-b border-l border-[#555] bg-[#fff9f0] pl-1">
        <input aria-label="Command" defaultValue=">>" className="h-4 w-full text-[11px]" />
      </div>
      <div className={`${ARIAL} flex h-[19px] pt-px text-[11px] leading-4`}>
        {["|◀", "◀", "▶", "▶|"].map((g) => (
          <button key={g} aria-label={`Scroll ${g}`} className="h-4 w-[18px] border border-[#888] bg-[#e4e4e4] text-[8px] leading-[13px] whitespace-nowrap text-[#999]">{g}</button>
        ))}
        <svg width="8" height="16" viewBox="0 0 8 16" fill="none" stroke="#222" strokeWidth="1.500" aria-hidden><path d="M1 0l6 16" /></svg>
        <button className="h-4 bg-white px-[3px] font-bold">Command Message</button>
        <svg width="13" height="16" viewBox="0 0 13 16" fill="none" stroke="#222" strokeWidth="1.500" aria-hidden><path d="M3 16L7 0l4 16" /></svg>
        <button className="h-4 px-[8px]">Analysis Message</button>
        <svg width="16" height="16" viewBox="0 0 16 16" fill="none" stroke="#222" strokeWidth="1.500" aria-hidden><path d="M4 16L9 0" /></svg>
        <span className="h-4 flex-1 border-r border-black" />
        <div className="ml-[3px] flex h-4 w-[320px] items-center border-l-2 border-black bg-[#f2f2f2]">
          <ChevronLeft size={13} strokeWidth={3} className="mr-[2px] ml-[2px]" />
          <span className="h-[14px] w-4 bg-[#cbcbcb]" />
          <ChevronRight size={13} strokeWidth={3} className="ml-auto" />
        </div>
      </div>
    </section>
  )
}

function Unit({ label, value, width }: { label: string; value: string; width: string }) {
  return (
    <span className={`${width} mr-[2px] flex h-4 shrink-0 items-center bg-[#dcdde0] pr-1`}>
      <select aria-label={label} className="h-4 min-w-0 flex-1 appearance-none pl-[3px] leading-4">
        <option>{value}</option>
      </select>
      <ChevronDown size={11} />
    </span>
  )
}

function StatusBar() {
  const btn = "flex h-[19px] w-[18px] shrink-0 items-center justify-center border-2 border-[#8fd2c4] bg-[#c4c8c8]"
  return (
    <footer className="h-4 shrink-0 overflow-hidden bg-[#262626] text-[11px] leading-[17px] text-[#e8e8e8]">
      <div className="flex">
        <span className="w-[527px] shrink-0">Help, press F1</span>
        <span className="w-[82px] shrink-0 border-l border-[#666] pl-[9px]">Node-31</span>
        <span className="w-[168px] shrink-0 border-l border-[#666] pl-1">U: 101.5, 0, 0</span>
        <span className="flex-1 border-l border-[#666] pl-[3px]">G: 101.5, 0, 0</span>
        <div className="flex w-[334px] shrink-0 bg-[#e6e6e6] text-[#222]">
          <span className="w-[2px] bg-[#666]" />
          <Unit label="Force unit" value="kN" width="w-12" />
          <Unit label="Length unit" value="m" width="w-12" />
          <span className="mr-[6px] w-px bg-black" />
          <button aria-label="Snap centre" className={btn}><Svg size={14}><path d="M8 0v16M0 8h16M4.500 4.500h7v7h-7z" strokeWidth="1.500" /></Svg></button>
          <span className="w-1" />
          <button aria-label="Snap edge" className={btn}><Svg size={14}><path d="M6 0v16M0 8h16M6 4h8M6 12h8M10 6L7 8l3 2" strokeWidth="1.500" /></Svg></button>
          <span className="w-1" />
          <button aria-label="Play" className={btn}><Svg size={14}><path d="M4 1l8 7-8 7z" fill="#444" /></Svg></button>
          <span className="w-1" />
          <Unit label="Filter" value="none" width="w-[44px]" />
          <button className="ml-1 h-[19px] w-[17px] shrink-0 border-2 border-[#52cfe0] leading-[13px] font-bold">?</button>
          <span className="ml-1 w-[17px] shrink-0 bg-[#00f6ff]" />
          <span className="ml-[2px] w-5 text-center text-[#777]">1</span>
          <span className="flex w-4 flex-col items-center justify-center text-[#555]">
            <ChevronUp size={8} />
            <ChevronDown size={8} />
          </span>
          <span className="w-3 text-center">/</span>
          <span className="min-w-0 flex-1 border-t border-l border-[#888] bg-white pl-3 leading-4">2</span>
        </div>
      </div>
    </footer>
  )
}

export default function App() {
  return (
    <div className={`${UI} relative flex h-screen flex-col overflow-hidden bg-[#555355]`}>
      <svg width="0" height="0" className="absolute" aria-hidden>
        <defs>
          <radialGradient id="ball" cx=".35" cy=".3" r=".8">
            <stop offset="0" stopColor="#f4f4f4" />
            <stop offset="1" stopColor="#8f8f8f" />
          </radialGradient>
        </defs>
      </svg>
      <TitleBar />
      <Ribbon />
      <Toolbar />
      <div className="flex min-h-0 flex-1">
        <WorksPane />
        <main className="ml-[3px] flex min-w-0 flex-1 flex-col">
          <div className="flex min-h-0 flex-1 flex-col border-t-2 border-l-3 border-[#eeecee]">
            <ModelView />
          </div>
          <DocTabs />
          <MessageWindow />
        </main>
      </div>
      <StatusBar />

      {/* hover tooltip and pointer over the ribbon */}
      <div role="tooltip" className="absolute top-[124px] left-[589px] border border-[#999] bg-white px-[5px] text-[11px] leading-[18px] whitespace-nowrap text-[#555] shadow-sm">
        Load to Masses
      </div>
      <svg width="14" height="20" viewBox="0 0 14 20" className="absolute top-[102px] left-[593px]" aria-hidden>
        <path d="M1 1v14l3.500-3 2.500 6 2.500-1-2.500-6h5z" fill="#fff" stroke="#222" />
      </svg>
    </div>
  )
}
